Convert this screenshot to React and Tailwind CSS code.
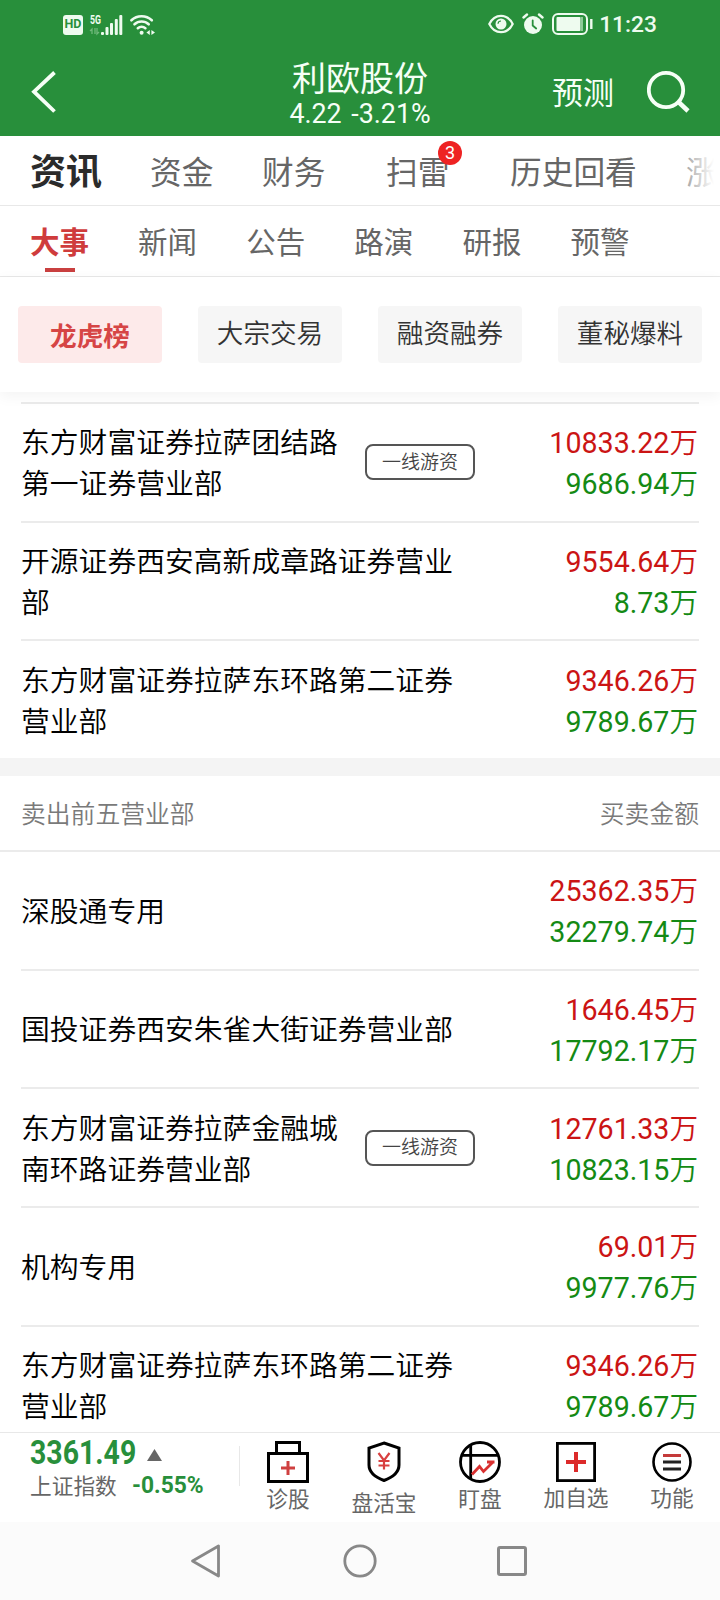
import React, { useState } from 'react';

const mainTabs = [
  { label: '资讯', width: 'w-[120px]' },
  { label: '资金', width: 'w-[112px]' },
  { label: '财务', width: 'w-[124px]' },
  { label: '扫雷', width: 'w-[124px]', badge: 3 },
  { label: '历史回看', width: 'w-[176px]' },
  { label: '涨', width: 'w-[32px]' },
];

const subTabs = ['大事', '新闻', '公告', '路演', '研报', '预警'];
const filters = ['龙虎榜', '大宗交易', '融资融券', '董秘爆料'];

const buyList = [
  { name: '东方财富证券拉萨团结路第一证券营业部', tag: '一线游资', buy: '10833.22', sell: '9686.94' },
  { name: '开源证券西安高新成章路证券营业部', buy: '9554.64', sell: '8.73' },
  { name: '东方财富证券拉萨东环路第二证券营业部', buy: '9346.26', sell: '9789.67' },
];

const sellList = [
  { name: '深股通专用', buy: '25362.35', sell: '32279.74' },
  { name: '国投证券西安朱雀大街证券营业部', buy: '1646.45', sell: '17792.17' },
  { name: '东方财富证券拉萨金融城南环路证券营业部', tag: '一线游资', buy: '12761.33', sell: '10823.15' },
  { name: '机构专用', buy: '69.01', sell: '9977.76' },
  { name: '东方财富证券拉萨东环路第二证券营业部', buy: '9346.26', sell: '9789.67' },
];

const StatusBar = () => (
  <div className="flex h-12 items-center justify-between pl-[63px] pr-[63px]">
    <div className="flex items-center pt-px">
      <span className="flex h-[20px] w-[20px] items-center justify-center rounded-[3px] bg-[#eefbef] text-[12.500px] font-bold leading-none text-[#288f3b]">
        HD
      </span>
      <svg className="ml-[7px] overflow-visible" width="33" height="22" viewBox="0 0 33 22" fill="#eefbef">
        <text x="0" y="9.500" fontSize="12" fontWeight="700" textLength="11" lengthAdjust="spacingAndGlyphs">5G</text>
        <path d="M2 20v-5l-2 2M5 14v6M7 14v6l2-2" stroke="#6fb87b" strokeWidth="1.3" fill="none" />
        <rect x="11" y="18" width="3" height="3" rx="1" />
        <rect x="15.5" y="13" width="3" height="8" rx="1" />
        <rect x="20" y="9" width="3" height="12" rx="1" />
        <rect x="24.8" y="5" width="3" height="16" rx="1" />
        <rect x="29.3" y="1" width="3" height="20" rx="1" />
      </svg>
      <svg className="ml-[6px]" width="27" height="22" viewBox="0 0 27 22" fill="none" stroke="#eefbef" strokeWidth="2.6" strokeLinecap="round">
        <path d="M2.4 6.3a15 15 0 0 1 20.4 0" />
        <path d="M5.5 10.3a10.4 10.4 0 0 1 14.2 0" />
        <path d="M8.8 14.2a5.8 5.8 0 0 1 7.6 0" />
        <circle cx="12.6" cy="18.8" r="2" fill="#eefbef" stroke="none" />
        <path d="M20.8 16v5l-3.4-2.5zM22.4 16v5l3.6-2.5z" fill="#eefbef" stroke="none" />
      </svg>
    </div>
    <div className="flex items-center text-[#eefbef]">
      <svg width="26" height="20" viewBox="0 0 26 20" fill="none" stroke="currentColor">
        <path d="M1.3 10C4 4.500 8 1.800 13 1.800S22 4.500 24.700 10C22 15.500 18 18.200 13 18.200S4 15.500 1.300 10Z" strokeWidth="2.2" />
        <circle cx="13" cy="10" r="5.500" fill="currentColor" stroke="none" />
        <path d="M10 9.800a3 3 0 0 1 3-2.800" stroke="#288f3b" strokeWidth="1.200" />
      </svg>
      <svg className="ml-[8px]" width="22" height="22" viewBox="0 0 22 22" fill="none" stroke="currentColor" strokeLinecap="round">
        <circle cx="11" cy="12" r="9" fill="currentColor" stroke="none" />
        <path d="M1.500 4.500L5 1.500M20.500 4.500L17 1.500" strokeWidth="2.400" />
        <path d="M10.700 7.500v5l3.500 3" stroke="#288f3b" strokeWidth="1.800" />
      </svg>
      <svg className="ml-[8px]" width="41" height="22" viewBox="0 0 41 22" fill="none" stroke="currentColor">
        <rect x="1" y="1" width="34" height="20" rx="5" strokeWidth="2" />
        <rect x="4.500" y="4" width="24" height="14" rx="1" fill="currentColor" stroke="none" />
        <rect x="28.500" y="4" width="2.500" height="14" fill="#8ecb98" stroke="none" />
        <path d="M39.300 6v10" strokeWidth="2.400" />
      </svg>
      <span className="ml-[6px] pt-[2px] text-[22.800px] font-medium leading-none">11:23</span>
    </div>
  </div>
);

const Header = () => (
  <header className="flex h-[136px] shrink-0 flex-col bg-[#288f3b] text-[#f6fff6]">
    <StatusBar />
    <div className="grid h-[88px] grid-cols-[180px_1fr_180px]">
      <svg className="ml-[30px] mt-[23px]" width="28" height="42" viewBox="0 0 28 42" fill="none" stroke="currentColor" strokeWidth="3.800">
        <path d="M24.500 1.500L4 20.700L24.500 40.500" />
      </svg>
      <div className="flex flex-col items-center pt-[12px]">
        <h1 className="text-[34px] leading-[38px]">利欧股份</h1>
        <p className="text-[26.800px] leading-[32px] [word-spacing:3px]">4.22 -3.21%</p>
      </div>
      <div className="flex pl-[12px]">
        <span className="mt-[26px] text-[31px] leading-[40px]">预测</span>
        <svg className="ml-[33px] mt-[22px]" width="44" height="44" viewBox="0 0 44 44" fill="none" stroke="currentColor" strokeWidth="3.800">
          <circle cx="19" cy="20" r="17.200" />
          <path d="M31 31.500L41 41" strokeWidth="4.500" />
        </svg>
      </div>
    </div>
  </header>
);

const ListRow = ({ item, last }) => (
  <div className={`flex items-center ${last ? 'h-[116.670px]' : 'h-[118.670px] border-b-2 border-[#ebebeb]'}`}>
    <div
      className={`shrink-0 break-all pt-[4px] text-[28.800px] font-[350] leading-[41px] text-black ${item.tag ? 'w-[320px]' : 'w-[436px]'}`}
    >
      {item.name}
    </div>
    {item.tag && (
      <span className="ml-[24px] flex h-[36px] w-[110px] items-center justify-center rounded-[8px] border-2 border-[#555] text-[19px] font-[350] leading-none text-[#444]">
        {item.tag}
      </span>
    )}
    <div className="ml-auto pr-px pt-[4px] text-right text-[28.600px] leading-[41px]">
      <p className="text-[#cb1414]">{item.buy}<span className="font-[350]">万</span></p>
      <p className="text-[#148a14]">{item.sell}<span className="font-[350]">万</span></p>
    </div>
  </div>
);

const IconBag = () => (
  <svg width="42" height="42" viewBox="0 0 42 42" fill="none" stroke="#000" strokeWidth="3">
    <rect x="1.500" y="12.500" width="39" height="28" />
    <path d="M9.500 12V1.500h23V12" />
    <path d="M14 27h14M21 20v14" stroke="#cf4040" />
  </svg>
);

const IconShield = () => (
  <svg width="34" height="42" viewBox="0 0 34 42" fill="none" stroke="#000" strokeWidth="3">
    <path d="M17 2L32 7v17c0 8-7 12.500-15 15.500C9 36.500 2 32 2 24V7z" />
    <path d="M11.500 12l5.500 7.500l5.500-7.500M17 19.500v9M11.500 20h11M11.500 24.500h11" stroke="#d84040" strokeWidth="2.200" />
  </svg>
);

const IconWatch = () => (
  <svg width="42" height="42" viewBox="0 0 42 42" fill="none" stroke="#000" strokeWidth="2.800">
    <circle cx="21" cy="21" r="19.500" />
    <path d="M11.700 4v34M3 14.300h36" />
    <path d="M13 33.500l7.500-8l4 5l9-9M28 21h7.500" stroke="#d93030" />
  </svg>
);

const IconAdd = () => (
  <svg width="40" height="42" viewBox="0 0 40 42" fill="none" stroke="#000" strokeWidth="2.800">
    <rect x="1.400" y="2.400" width="37.200" height="37.200" />
    <path d="M10 21h20M20 11v20" stroke="#dc2a2a" strokeWidth="4" />
  </svg>
);

const IconMenu = () => (
  <svg width="40" height="42" viewBox="0 0 40 42" fill="none" stroke="#222" strokeWidth="3">
    <circle cx="20" cy="21" r="18.500" stroke="#000" strokeWidth="2.600" />
    <path d="M11 14.500h18" stroke="#c43a3a" />
    <path d="M11 21h18M11 28h18" />
  </svg>
);

const actions = [
  { label: '诊股', Icon: IconBag, offset: 'mt-[2px]' },
  { label: '盘活宝', Icon: IconShield, offset: 'mt-[6px]' },
  { label: '盯盘', Icon: IconWatch, offset: 'mt-[2px]' },
  { label: '加自选', Icon: IconAdd, offset: 'mt-[1px]' },
  { label: '功能', Icon: IconMenu, offset: 'mt-[1px]' },
];

const BottomBar = () => (
  <div className="flex h-[90px] shrink-0 border-t border-[#e8e8e8] bg-white">
    <div className="w-[239px] shrink-0 pl-[30px] pt-[3px]">
      <div className="flex h-[34px] items-center">
        <span className="w-[117px] origin-left scale-x-[0.850] text-[33.500px] font-bold leading-[34px] text-[#288f3b]">3361.49</span>
        <svg className="mt-[3px]" width="15" height="12" viewBox="0 0 15 12" fill="#666">
          <path d="M7.500 0L15 12H0z" />
        </svg>
      </div>
      <div className="flex h-[34px] items-center">
        <span className="text-[21.700px] leading-[32px] text-[#666]">上证指数</span>
        <span className="ml-[15px] mt-[-4px] origin-left scale-x-[0.930] text-[24.500px] font-bold leading-[30px] text-[#288f3b]">-0.55%</span>
      </div>
    </div>
    <div className="mt-[13px] h-[40px] w-px bg-[#e8e8e8]" />
    <div className="grid flex-1 grid-cols-5">
      {actions.map(({ label, Icon, offset }) => (
        <div key={label} className="flex flex-col items-center pt-[8px]">
          <Icon />
          <span className={`text-[21.700px] leading-[30px] text-[#666] ${offset}`}>{label}</span>
        </div>
      ))}
    </div>
  </div>
);

// Tombol navigasi sistem
const SystemNav = () => (
  <nav className="flex h-[78px] shrink-0 items-center bg-[#fbfbfb] pl-[190px]">
    <svg width="32" height="36" viewBox="0 0 32 36" fill="none" stroke="#888" strokeWidth="2.800" strokeLinejoin="round">
      <path d="M28.500 3v30L2.500 18z" />
    </svg>
    <svg className="ml-[121px]" width="34" height="34" viewBox="0 0 34 34" fill="none" stroke="#888" strokeWidth="2.800">
      <circle cx="17" cy="17" r="15.200" />
    </svg>
    <span className="ml-[120px] h-[30px] w-[30px] rounded-[3px] border-3 border-[#888]" />
  </nav>
);

const App = () => {
  const [activeTab, setActiveTab] = useState('资讯');
  const [activeSub, setActiveSub] = useState('大事');
  const [activeFilter, setActiveFilter] = useState('龙虎榜');

  return (
    <div className="flex h-[1600px] w-[720px] flex-col overflow-hidden bg-white font-[Roboto,'Noto_Sans_CJK_SC',sans-serif]">
      <Header />

      {/* Tab utama */}
      <div className="relative flex h-[70px] shrink-0 overflow-hidden border-b border-[#e8e8e8] pl-[30px]">
        {mainTabs.map((tab) => (
          <button
            key={tab.label}
            onClick={() => setActiveTab(tab.label)}
            className={`relative h-[70px] shrink-0 whitespace-nowrap text-left ${tab.width} ${
              activeTab === tab.label
                ? 'pt-[3px] text-[36px] font-bold text-[#2b2b2b]'
                : 'pt-[5px] text-[31.700px] text-[#666]'
            }`}
          >
            {tab.label}
            {tab.badge && (
              <span className="absolute left-[52px] top-[5px] flex h-6 w-6 items-center justify-center rounded-full bg-[#ee2323] text-[18px] font-normal leading-none text-white">
                {tab.badge}
              </span>
            )}
          </button>
        ))}
        <div className="absolute right-0 top-0 h-full w-[40px] bg-linear-to-r from-white/30 to-white to-85%" />
      </div>

      {/* Sub tab */}
      <div className="flex h-[71px] shrink-0 border-b border-[#e8e8e8] pl-[30px]">
        {subTabs.map((tab) => (
          <button key={tab} onClick={() => setActiveSub(tab)} className="flex w-[108.100px] flex-col items-start">
            <span className={`h-[62px] text-[29.500px] leading-[75px] ${activeSub === tab ? 'font-bold text-[#cf3c3c]' : 'text-[#666]'}`}>
              {tab}
            </span>
            {activeSub === tab && <span className="ml-[15px] h-1 w-[30px] bg-[#c94040]" />}
          </button>
        ))}
      </div>

      {/* Filter */}
      <div className="z-10 flex h-[115px] shrink-0 gap-9 bg-white px-[18px] pt-[29px] shadow-[0_4px_14px_rgba(0,0,0,0.05)]">
        {filters.map((filter) => (
          <button
            key={filter}
            onClick={() => setActiveFilter(filter)}
            className={`h-[57px] w-[144px] rounded-[4px] text-[26.600px] ${
              activeFilter === filter
                ? 'bg-[#fdeaea] pt-[4px] font-bold text-[#d64545]'
                : 'bg-[#f6f6f6] pb-[2px] font-[350] text-[#333]'
            }`}
          >
            {filter}
          </button>
        ))}
      </div>

      {/* Daftar broker */}
      <div className="min-h-0 flex-1 overflow-hidden">
        <div className="mx-[21px] mt-[10px] border-t-2 border-[#ebebeb]">
          {buyList.map((item, i) => (
            <ListRow key={item.name} item={item} last={i === buyList.length - 1} />
          ))}
        </div>
        <div className="h-[18px] bg-[#f4f4f4]" />
        <div className="flex h-[76px] items-center justify-between border-b-2 border-[#ebebeb] px-[21px] pt-[3px] text-[24.800px] font-[350] text-[#7a7a7a]">
          <span>卖出前五营业部</span>
          <span>买卖金额</span>
        </div>
        <div className="mx-[21px]">
          {sellList.map((item, i) => (
            <ListRow key={item.name} item={item} last={i === sellList.length - 1} />
          ))}
        </div>
      </div>

      <BottomBar />
      <SystemNav />
    </div>
  );
};

export default App;
